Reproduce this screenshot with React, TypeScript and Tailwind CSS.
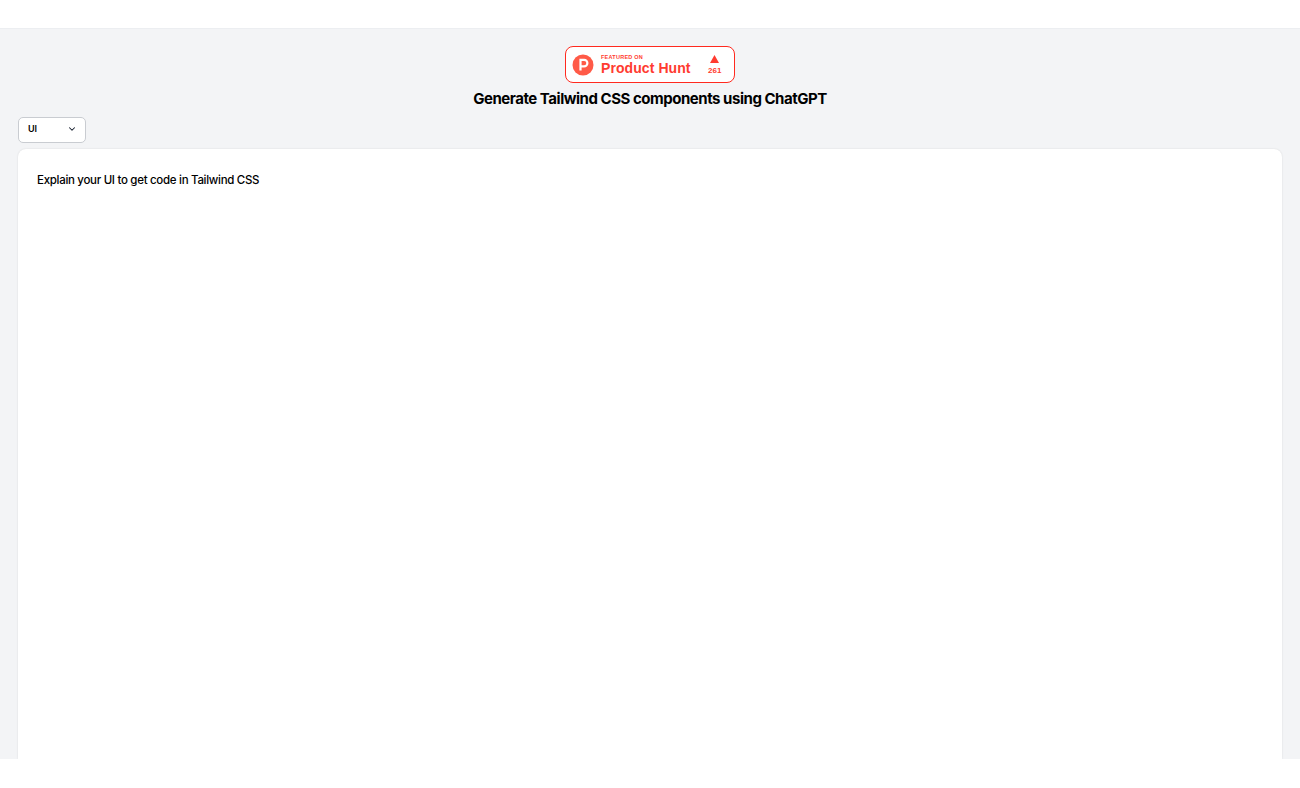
import { ChevronDown } from "lucide-react";

function ProductHuntBadge() {
  return (
    <div className="flex h-[37px] w-[170px] items-center rounded-[8px] border border-[#ff2a1f] bg-white pl-[6px] font-['Liberation_Sans',sans-serif] text-[#ff3b30]">
      <svg width="22" height="22" viewBox="0 0 22 22" className="shrink-0">
        <circle cx="11" cy="11" r="10.5" fill="#ff5a47" />
        <path d="M8.5 16.5V5.8h3.6a3.3 3.3 0 0 1 0 6.6H8.5" fill="none" stroke="#fff" strokeWidth="2.2" />
      </svg>
      <div className="ml-[7px] flex w-[93px] flex-col pt-[1px]">
        <span className="text-[5.5px] leading-[6px] font-bold tracking-[0.25px]">FEATURED ON</span>
        <span className="mt-[1px] text-[14px] leading-[15px] font-bold tracking-[0.08px] whitespace-nowrap">Product Hunt</span>
      </div>
      <div className="ml-[14px] flex flex-col items-center">
        <svg width="9" height="8" viewBox="0 0 9 8">
          <path d="M4.5 0 9 8H0z" fill="#ff3b30" />
        </svg>
        <span className="mt-[3px] text-[8px] leading-[9px] font-bold">261</span>
      </div>
    </div>
  );
}

export default function App() {
  return (
    <div className="flex h-[788px] flex-col bg-white font-['Inter',sans-serif] text-black">
      <div className="h-[29px] border-b border-[#eceef1] bg-white" />
      <div className="flex h-[730px] flex-col overflow-hidden bg-[#f3f4f6] px-[18px]">
        <div className="flex flex-col items-center pt-[17px]">
          <ProductHuntBadge />
          <h1 className="mt-[6px] text-[15px] leading-[20px] font-bold tracking-[-0.47px]">Generate Tailwind CSS components using ChatGPT</h1>
        </div>
        <div className="mt-[8px] flex h-[26px] w-[68px] items-center justify-between rounded-[5px] border border-[#c9ccd1] bg-white pr-[8px] pb-[2px] pl-[9px]">
          <span className="text-[9px] font-semibold">UI</span>
          <ChevronDown className="h-[10px] w-[10px] text-gray-900" strokeWidth={2.5} />
        </div>
        <div className="mt-[6px] flex-1 rounded-t-[8px] bg-white px-[19px] pt-[23px] shadow-[0_0_2px_rgba(0,0,0,0.12)]">
          <p className="text-[11.5px] leading-[16px] font-medium tracking-[-0.3px]">Explain your UI to get code in Tailwind CSS</p>
        </div>
      </div>
    </div>
  );
}
